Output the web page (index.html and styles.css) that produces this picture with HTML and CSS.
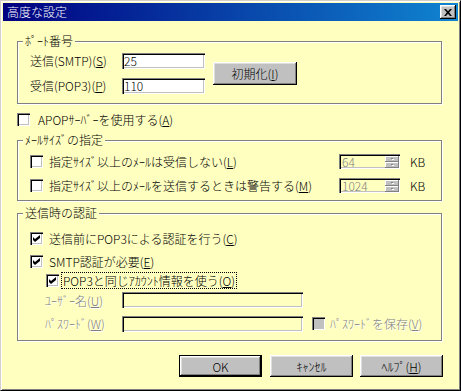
FILE: index.html
```html
<!DOCTYPE html>
<html>
<head>
  <meta charset="UTF-8" />
  <title>高度な設定</title>
  <link rel="stylesheet" href="styles.css">
</head>
<body>
  <div class="window">
    <div class="titlebar">
      <span class="title">高度な設定</span>
      <span class="close">
        <svg width="8" height="7" viewBox="0 0 8 7"><path d="M0 0h2l2 2.3L6 0h2L5.1 3.5 8 7H6L4 4.7 2 7H0l2.9-3.5z" fill="#000"/></svg>
      </span>
    </div>

    <div class="content">
      <!-- Port numbers -->
      <div class="group port">
        <span class="legend">ﾎﾟｰﾄ番号</span>
        <div class="port-body">
          <div class="port-grid">
            <span>送信(SMTP)(<u>S</u>)</span>
            <span class="edit">25</span>
            <span>受信(POP3)(<u>P</u>)</span>
            <span class="edit">110</span>
          </div>
          <span class="btn btn-reset">初期化(<u>I</u>)</span>
        </div>
      </div>

      <div class="row apop">
        <span class="box"></span>
        <span class="label">APOPｻｰﾊﾞｰを使用する(<u>A</u>)</span>
      </div>

      <!-- Mail size -->
      <div class="group size">
        <span class="legend">ﾒｰﾙｻｲｽﾞの指定</span>
        <div class="size-row">
          <span class="box"></span>
          <span class="label grow">指定ｻｲｽﾞ以上のﾒｰﾙは受信しない(<u>L</u>)</span>
          <span class="spin">
            <span class="spin-value">64</span>
            <span class="spin-btns"><span class="spin-btn"></span><span class="spin-btn"></span></span>
          </span>
          <span class="unit">KB</span>
        </div>
        <div class="size-row">
          <span class="box"></span>
          <span class="label grow">指定ｻｲｽﾞ以上のﾒｰﾙを送信するときは警告する(<u>M</u>)</span>
          <span class="spin">
            <span class="spin-value">1024</span>
            <span class="spin-btns"><span class="spin-btn"></span><span class="spin-btn"></span></span>
          </span>
          <span class="unit">KB</span>
        </div>
      </div>

      <!-- Authentication -->
      <div class="group auth">
        <span class="legend">送信時の認証</span>
        <div class="row r1">
          <span class="box checked"><svg width="7" height="7" viewBox="0 0 7 7"><path d="M0 2l2 2 5-4v3L2 7 0 5z" fill="#000"/></svg></span>
          <span class="label">送信前にPOP3による認証を行う(<u>C</u>)</span>
        </div>
        <div class="row r2">
          <span class="box checked"><svg width="7" height="7" viewBox="0 0 7 7"><path d="M0 2l2 2 5-4v3L2 7 0 5z" fill="#000"/></svg></span>
          <span class="label">SMTP認証が必要(<u>E</u>)</span>
        </div>
        <div class="row r3">
          <span class="box checked"><svg width="7" height="7" viewBox="0 0 7 7"><path d="M0 2l2 2 5-4v3L2 7 0 5z" fill="#000"/></svg></span>
          <span class="label focus">POP3と同じｱｶｳﾝﾄ情報を使う(<u>O</u>)</span>
        </div>
        <div class="row r4">
          <span class="field-label disabled">ﾕｰｻﾞｰ名(<u>U</u>)</span>
          <span class="edit edit-off"></span>
        </div>
        <div class="row r5">
          <span class="field-label disabled">ﾊﾟｽﾜｰﾄﾞ(<u>W</u>)</span>
          <span class="edit edit-off"></span>
          <span class="box box-off"></span>
          <span class="label disabled save">ﾊﾟｽﾜｰﾄﾞを保存(<u>V</u>)</span>
        </div>
      </div>

      <div class="buttons">
        <span class="btn btn-default">OK</span>
        <span class="btn">ｷｬﾝｾﾙ</span>
        <span class="btn">ﾍﾙﾌﾟ(<u>H</u>)</span>
      </div>
    </div>
  </div>
</body>
</html>
```

FILE: styles.css
```css
* {
  margin: 0;
  padding: 0;
  box-sizing: border-box;
}

body {
  font-family: "Noto Sans CJK JP", "Noto Sans", sans-serif;
  font-size: 12px;
  font-weight: 300;
  color: #000;
  background: #fff;
}

u {
  text-decoration: underline;
  text-underline-offset: 1px;
}

.window {
  width: 461px;
  height: 391px;
  background: #ffffc0;
  border: 1px solid;
  border-color: #d4d0c8 #000 #000 #d4d0c8;
  box-shadow: inset 1px 1px #fff, inset -1px -1px #808080;
  padding: 2px;
}

.titlebar {
  height: 18px;
  background: linear-gradient(to right, #000080, #1084d0);
  color: #fff;
  display: flex;
  align-items: center;
  justify-content: space-between;
  padding: 0 2px 0 4px;
}

.title {
  line-height: 14px;
}

.close {
  width: 16px;
  height: 14px;
  background: #c0c0c0;
  box-shadow: inset -1px -1px #000, inset 1px 1px #fff, inset -2px -2px #808080, inset 2px 2px #dfdfdf;
  display: flex;
  align-items: center;
  justify-content: center;
  padding-right: 1px;
}

.content {
  padding: 0 16px 0 14px;
}

/* group boxes */
.group {
  position: relative;
  border: 1px solid #808080;
  box-shadow: inset 1px 1px #fff, 1px 1px #fff;
}

.legend {
  position: absolute;
  top: -8px;
  left: 5px;
  padding: 0 2px;
  line-height: 14px;
  background: #ffffc0;
}

.port {
  margin-top: 20px;
  padding: 10px 0 9px 12px;
}

.port-body {
  display: flex;
  align-items: center;
}

.port-grid {
  display: grid;
  grid-template-columns: 92px 83px;
  row-gap: 8px;
  align-items: center;
}

.edit {
  display: block;
  height: 16px;
  background: #fff;
  box-shadow: inset 1px 1px #808080, inset 2px 2px #000, inset -1px -1px #fff, inset -2px -2px #c0c0c0;
  padding: 0 2px;
  line-height: 16px;
}

.edit-off {
  background: #ffffc0;
  width: 181px;
}

/* buttons */
.btn {
  width: 83px;
  height: 22px;
  background: #c0c0c0;
  box-shadow: inset -1px -1px #000, inset 1px 1px #fff, inset -2px -2px #808080, inset 2px 2px #dfdfdf;
  display: flex;
  align-items: center;
  justify-content: center;
}

.btn-reset {
  width: 84px;
  height: 23px;
  margin-left: 8px;
}

.btn-default {
  border: 1px solid #000;
  margin-right: 1px;
}

.buttons {
  display: flex;
  justify-content: flex-end;
  gap: 7px;
  margin-top: 14px;
  margin-right: -1px;
}

/* checkboxes */
.row {
  display: flex;
  align-items: center;
}

.box {
  flex: none;
  width: 13px;
  height: 13px;
  background: #fff;
  box-shadow: inset 1px 1px #808080, inset 2px 2px #000, inset -1px -1px #fff, inset -2px -2px #c0c0c0;
  display: flex;
  align-items: center;
  justify-content: center;
}

.box-off {
  background: #c0c0c0;
  margin-left: 9px;
}

.label {
  margin-left: 6px;
  line-height: 15px;
}

.disabled {
  color: #808080;
  text-shadow: 1px 1px #fff;
}

.apop {
  margin-top: 9px;
  height: 13px;
}

.apop .label {
  margin-left: 8px;
}

/* mail size */
.size {
  margin-top: 14px;
  padding: 12px 0 7px 12px;
}

.size-row {
  display: flex;
  align-items: center;
  height: 16px;
}

.size-row + .size-row {
  margin-top: 8px;
}

.grow {
  flex: 1;
}

.spin {
  display: flex;
  width: 61px;
  height: 15px;
  background: #ffffc0;
  color: #808080;
  box-shadow: inset 1px 1px #808080, inset 2px 2px #000, inset -1px -1px #fff, inset -2px -2px #c0c0c0;
  padding: 2px 1px 1px 2px;
}

.spin-value {
  flex: 1;
  line-height: 12px;
  padding-left: 1px;
}

.spin-btns {
  width: 14px;
  display: flex;
  flex-direction: column;
}

.spin-btn {
  flex: 1;
  background: #c0c0c0;
  box-shadow: inset -1px -1px #808080, inset 1px 1px #fff;
  display: flex;
  align-items: center;
  justify-content: center;
}

.spin-btn::after {
  content: "";
  width: 2px;
  height: 1px;
  background: #808080;
  box-shadow: 1px 1px #fff;
}

.unit {
  width: 31px;
  margin-left: 10px;
}

/* authentication */
.auth {
  margin-top: 12px;
  padding: 16px 0 8px 12px;
}

.auth .row {
  height: 17px;
}

.r2 {
  margin-top: 6px;
}

.r3 {
  margin-top: 2px;
  padding-left: 16px;
}

.focus {
  margin-left: 3px;
  padding: 0 1px;
  outline: 1px dotted #000;
}

.auth .r4 {
  margin-top: 3px;
  height: 16px;
  padding-left: 15px;
}

.auth .r5 {
  margin-top: 7px;
  padding-left: 15px;
}

.field-label {
  width: 77px;
}

.save {
  margin-left: 5px;
}
```
